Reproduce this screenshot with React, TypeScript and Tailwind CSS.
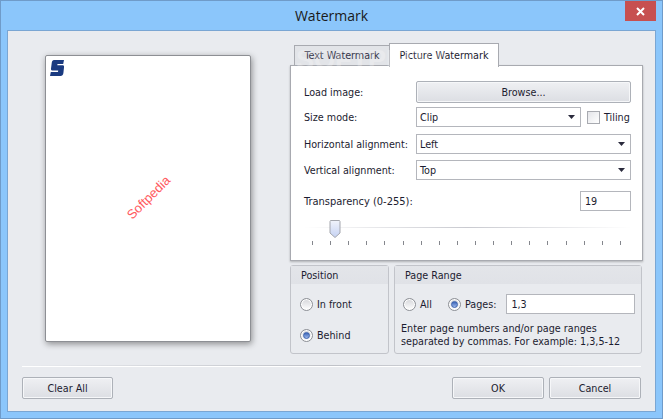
import React from 'react';

const ticks = Array.from({ length: 18 }, (_, i) => i);

function Btn({ label, className }: { label: string; className: string }) {
  return (
    <div className={`flex items-center justify-center rounded-[2px] border border-[#adb1b8] bg-gradient-to-b from-[#eff0f3] to-[#dcdee3] text-[#1c1c30] shadow-[inset_0_0_0_1px_#f6f7f9] ${className}`}>
      {label}
    </div>
  );
}

function Select({ value, className }: { value: string; className: string }) {
  return (
    <div className={`flex h-5 items-center justify-between border border-[#b4b6bc] bg-white pl-[3px] pr-[5px] text-[#1c1c30] ${className}`}>
      <span>{value}</span>
      <svg width="7" height="4" viewBox="0 0 7 4">
        <path d="M0 0H7L3.5 4Z" fill="#2a2a3c" />
      </svg>
    </div>
  );
}

function Radio({ label, checked }: { label: string; checked?: boolean }) {
  return (
    <div className="flex items-center gap-[4px] whitespace-nowrap text-[#1c1c30]">
      <div className="flex h-[13px] w-[13px] items-center justify-center rounded-full border border-[#8d9096] bg-gradient-to-b from-[#d5d6da] to-[#ffffff] shadow-[inset_0_0_0_1px_#ffffff]">
        {checked && <div className="h-[7px] w-[7px] rounded-full border border-[#3c62ad] bg-gradient-to-b from-[#3d66b8] to-[#9db7ea]" />}
      </div>
      <span>{label}</span>
    </div>
  );
}

function Row({ label, children, className }: { label: string; children: React.ReactNode; className?: string }) {
  return (
    <div className={`flex items-center ${className ?? ''}`}>
      <div className="w-[112px] shrink-0 whitespace-nowrap text-[#1c1c30]">{label}</div>
      {children}
    </div>
  );
}

function GroupBox({ title, className, titleClass, children }: { title: string; className: string; titleClass: string; children: React.ReactNode }) {
  return (
    <div className={`flex flex-col rounded-[3px] border border-[#c2c4ca] ${className}`}>
      <div className={`flex h-[18px] shrink-0 items-center bg-gradient-to-b from-[#e3e5e9] to-[#e0e2e7] text-[#1c1c30] ${titleClass}`}>{title}</div>
      {children}
    </div>
  );
}

export default function App() {
  return (
    <div
      className="relative flex h-[419px] w-[663px] flex-col overflow-hidden border border-[#6f9bc9] bg-[#8bc6fb] text-[10.7px] font-stretch-condensed leading-[13px]"
      style={{ fontFamily: '"DejaVu Sans", "Noto Sans", sans-serif' }}
    >
      {/* title bar */}
      <div className="flex h-[29px] shrink-0 items-center justify-center text-[14px] font-stretch-normal text-[#1a1a1a]" style={{ fontFamily: '"Open Sans", sans-serif' }}>
        Watermark
      </div>
      <div className="absolute right-[6px] top-0 flex h-[20px] w-[31px] items-center justify-center bg-[#c75050]">
        <svg width="9" height="9" viewBox="0 0 9 9">
          <path d="M1 1L8 8M8 1L1 8" stroke="#fff" strokeWidth="2" />
        </svg>
      </div>

      {/* client area */}
      <div className="mx-[6px] mb-[6px] flex min-h-0 flex-1 flex-col border border-[#7aa6d3] bg-[#e9ebef]">
        <div className="flex h-[334px] shrink-0">
          {/* page preview */}
          <div className="w-[282px] shrink-0 pl-[37px] pt-[24px]">
            <div className="relative h-[287px] w-[206px] rounded-[2px] border border-[#8d8f94] bg-white shadow-[1px_2px_6px_rgba(0,0,0,0.4)]">
              <svg className="absolute left-[4px] top-[4px]" width="14" height="16" viewBox="0 0 14 16">
                <path d="M4 0H14L13.2 4H7.5L7.3 5.2H12.5C13.8 5.2 14.2 6 14 7.5L13.4 13C13.2 15 12 16 10.5 16H0L.8 12H8L8.2 10.6H3C1.5 10.6 .8 10 1 8.5L1.8 2.5C2 1 2.8 0 4 0Z" fill="#1a3a80" />
              </svg>
              <div
                className="absolute left-[75px] top-[135px] -rotate-45 text-[13px] leading-none font-stretch-normal text-[#ff5a60]"
                style={{ fontFamily: '"Liberation Sans", sans-serif' }}
              >
                Softpedia
              </div>
            </div>
          </div>

          {/* right column */}
          <div className="flex w-[353px] shrink-0 flex-col pt-[12px]">
            <div className="relative h-[22px] shrink-0 pl-[4px]">
              <div className="flex h-full items-end">
                <div className="mb-[-1px] flex h-[21px] w-[96px] items-center justify-center border border-[#a8aab0] bg-[#e2e4e8] text-[#35354a]">Text Watermark</div>
                <div className="z-10 mb-[-2px] -ml-[1px] flex h-[24px] w-[110px] items-center justify-center border border-b-0 border-[#a8aab0] bg-white text-[#1c1c30]">Picture Watermark</div>
              </div>
              <div className="pointer-events-none absolute left-[6px] top-[4px] z-20 text-[27px] leading-none font-bold text-white opacity-25" style={{ fontFamily: '"Liberation Sans", sans-serif' }}>SOFTPEDIA</div>
            </div>

            <div className="flex h-[196px] shrink-0 flex-col border border-[#a8aab0] bg-white pl-[13px] pr-[11px] pt-[15px] shadow-[0_1px_2px_rgba(0,0,0,0.25)]">
              <Row label="Load image:">
                <Btn label="Browse..." className="h-[22px] flex-1" />
              </Row>
              <Row label="Size mode:" className="mt-[4px]">
                <Select value="Clip" className="w-[165px]" />
                <div className="ml-[6px] h-[13px] w-[13px] border border-[#a8aab0] bg-gradient-to-br from-[#e4e5e9] to-[#ffffff]" />
                <span className="ml-[4px] text-[#1c1c30]">Tiling</span>
              </Row>
              <Row label="Horizontal alignment:" className="mt-[7px]">
                <Select value="Left" className="flex-1" />
              </Row>
              <Row label="Vertical alignment:" className="mt-[6px]">
                <Select value="Top" className="flex-1" />
              </Row>
              <div className="mt-[11px] flex items-center justify-between">
                <span className="text-[11px] text-[#1c1c30]">Transparency (0-255):</span>
                <div className="flex h-5 w-[51px] items-center border border-[#b4b6bc] pl-[4px] text-[#1c1c30]">19</div>
              </div>

              {/* slider */}
              <div className="relative mt-[10px] h-[25px]">
                <div className="absolute left-0 right-0 top-[6px] h-[1px] bg-gradient-to-r from-white via-[#c9cad0] to-white" />
                <svg className="absolute left-[25px] top-[-1px]" width="12" height="18" viewBox="0 0 12 18">
                  <defs>
                    <linearGradient id="thumb" x1="0" y1="0" x2="0" y2="1">
                      <stop offset="0" stopColor="#f1f3fa" />
                      <stop offset="1" stopColor="#c5d2f3" />
                    </linearGradient>
                  </defs>
                  <path d="M1.5 0.5H10.5L11 1.5V13L6 17.5L1 13V1.5Z" fill="url(#thumb)" stroke="#a4a6ad" />
                </svg>
                <div className="absolute left-[8px] top-[20px] flex w-[309px] justify-between">
                  {ticks.map((t) => (
                    <div key={t} className="h-[4px] w-[1px] bg-[#85878d]" />
                  ))}
                </div>
              </div>
            </div>

            <div className="mt-[4px] flex h-[89px] shrink-0 gap-[5px]">
              <GroupBox title="Position" className="w-[99px]" titleClass="pl-[10px]">
                <div className="flex flex-col gap-[18px] pl-[9px] pt-[14px]">
                  <Radio label="In front" />
                  <Radio label="Behind" checked />
                </div>
              </GroupBox>
              <GroupBox title="Page Range" className="w-[248px]" titleClass="pl-[10px]">
                <div className="flex items-center pl-[8px] pt-[10px]">
                  <Radio label="All" />
                  <div className="ml-[16px]">
                    <Radio label="Pages:" checked />
                  </div>
                  <div className="ml-[10px] flex h-[20px] w-[129px] items-center border border-[#b4b6bc] bg-white pl-[4px] text-[#1c1c30]">1,3</div>
                </div>
                <div className="whitespace-nowrap pl-[6px] pt-[8px] text-[#1c1c30]">
                  Enter page numbers and/or page ranges
                  <br />
                  separated by commas. For example: 1,3,5-12
                </div>
              </GroupBox>
            </div>
          </div>
        </div>

        {/* separator */}
        <div className="mx-[14px] h-[1px] shrink-0 bg-gradient-to-r from-[#e9ebef] via-[#c0c2c8] to-[#e9ebef]" />
        <div className="mx-[14px] h-[1px] shrink-0 bg-white" />

        {/* footer buttons */}
        <div className="flex items-start justify-between pl-[14px] pr-[14px] pt-[10px]">
          <Btn label="Clear All" className="h-[22px] w-[91px]" />
          <div className="flex gap-[5px]">
            <Btn label="OK" className="h-[22px] w-[92px]" />
            <Btn label="Cancel" className="h-[22px] w-[92px]" />
          </div>
        </div>
      </div>
    </div>
  );
}
